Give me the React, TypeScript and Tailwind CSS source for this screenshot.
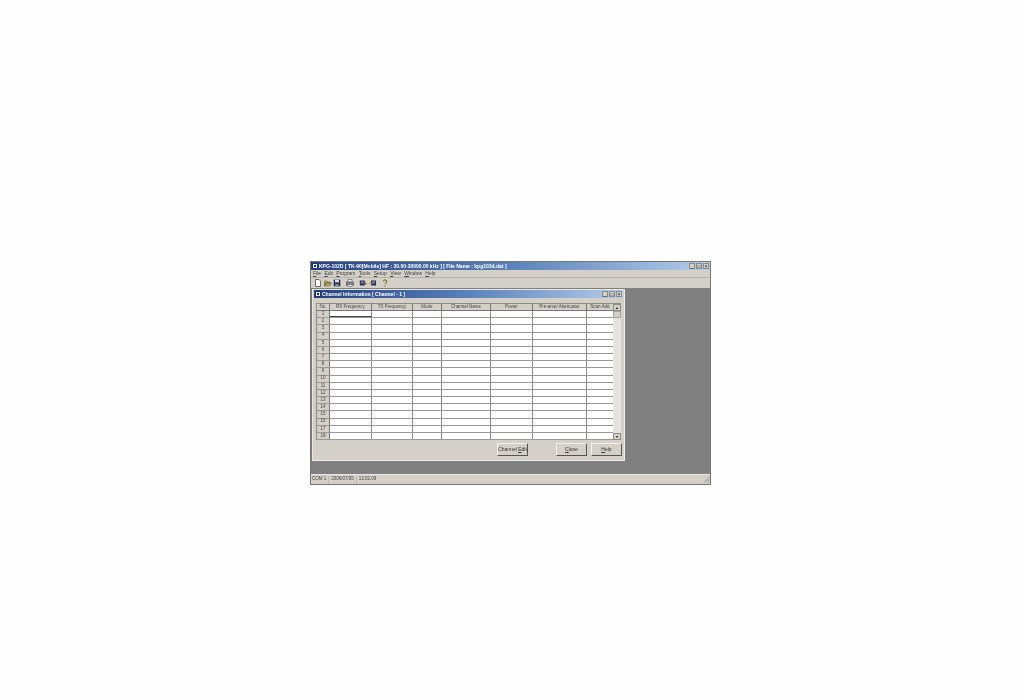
const columns = [
  { label: 'RX Frequency', width: 'w-[42px]' },
  { label: 'TX Frequency', width: 'w-[41px]' },
  { label: 'Mode', width: 'w-[29px]' },
  { label: 'Channel Name', width: 'w-[49px]' },
  { label: 'Power', width: 'w-[42px]' },
  { label: 'Pre-amp/ Attenuator', width: 'w-[54px]' },
  { label: 'Scan Add', width: 'w-[27px]' },
];

const rows = Array.from({ length: 18 }, (_, i) => i + 1);
const menus = ['File', 'Edit', 'Program', 'Tools', 'Setup', 'View', 'Window', 'Help'];

function AppIcon() {
  return (
    <div className="w-[6px] h-[6px] bg-[#e8eef8] border border-[#26365f] flex items-center justify-center shrink-0">
      <div className="w-[2px] h-[2px] bg-[#1d2f66]" />
    </div>
  );
}

function WinButtons() {
  return (
    <div className="flex items-center gap-[1px]">
      {['_', '□', '×'].map((g) => (
        <div
          key={g}
          className="w-[6px] h-[6px] bg-[#d4d0c8] border border-[#8b8b85] flex items-center justify-center text-[5px] leading-none text-[#222]"
        >
          {g}
        </div>
      ))}
    </div>
  );
}

function ToolIcon({ kind }: { kind: string }) {
  return (
    <svg width="8" height="8" viewBox="0 0 8 8" className="shrink-0">
      {kind === 'new' && <path d="M1.5.5h3.5l1.5 1.5v5.5h-5z" fill="#fff" stroke="#333" strokeWidth=".7" />}
      {kind === 'open' && <path d="M.5 2h2.5l1 1h2v1H2L.5 7zM2 4h5.5L6 7H.5z" fill="#c9b045" stroke="#444" strokeWidth=".5" />}
      {kind === 'save' && (
        <g>
          <rect x=".7" y=".7" width="6.6" height="6.6" fill="#1c2c5c" />
          <rect x="2" y="1" width="4" height="2.4" fill="#ddd" />
          <rect x="2.2" y="5" width="3.4" height="2" fill="#888" />
        </g>
      )}
      {kind === 'print' && (
        <g>
          <rect x="2" y=".7" width="4" height="2.5" fill="#eee" stroke="#444" strokeWidth=".5" />
          <rect x=".6" y="3" width="6.8" height="3.2" fill="#888" stroke="#333" strokeWidth=".5" />
          <rect x="2" y="5.5" width="4" height="1.8" fill="#eee" stroke="#444" strokeWidth=".4" />
        </g>
      )}
      {kind === 'read' && (
        <g>
          <rect x=".8" y="1.5" width="5" height="5" fill="#2a2f55" />
          <rect x="2" y="2.4" width="2.6" height="2" fill="#7d8fc0" />
          <path d="M5 4.5h2.6M7.6 4.5l-1.4-1.2M7.6 4.5l-1.4 1.2" stroke="#7c5a18" strokeWidth=".7" fill="none" />
        </g>
      )}
      {kind === 'write' && (
        <g>
          <rect x="2" y="1.5" width="5" height="5" fill="#2a2f55" />
          <rect x="3.2" y="2.4" width="2.6" height="2" fill="#7d8fc0" />
          <path d="M.4 4.5H3M3 4.5L1.8 3.3M3 4.5L1.8 5.7" stroke="#b58a20" strokeWidth=".7" fill="none" />
        </g>
      )}
      {kind === 'help' && (
        <path d="M2.5 2.4a1.6 1.6 0 1 1 2.4 1.5c-.6.4-.9.7-.9 1.4M4 6.3v1.2" fill="none" stroke="#7a7a20" strokeWidth="1.1" />
      )}
    </svg>
  );
}

function DialogButton({ children, width }: { children: React.ReactNode; width: string }) {
  return (
    <div
      className={`${width} h-[13px] bg-[#d4d0c8] border border-t-[#f2f0ea] border-l-[#f2f0ea] border-r-[#55554f] border-b-[#55554f] flex items-center justify-center text-[5px] leading-none text-[#333]`}
    >
      {children}
    </div>
  );
}

export default function App() {
  return (
    <div
      className="w-full h-[700px] bg-[#fefefe] pt-[261px] pl-[310px] overflow-hidden"
      style={{ fontFamily: '"Liberation Sans", Arial, sans-serif' }}
    >
      <div className="w-[401px] h-[224px] bg-[#d4d0c8] border border-[#77776f] flex flex-col blur-[0.4px]">
        {/* main title */}
        <div className="h-[8px] shrink-0 bg-gradient-to-r from-[#24417f] via-[#5b82bb] to-[#b4cde9] flex items-center pl-[1px] pr-[1px] gap-[1px]">
          <AppIcon />
          <span className="text-[5px] leading-none font-bold text-white whitespace-nowrap">
            KPG-102D [ TK-90[Mobile] HF : 30.00-30000.00 kHz ] [ File Name : kpg102d.dat ]
          </span>
          <div className="ml-auto">
            <WinButtons />
          </div>
        </div>

        {/* menu */}
        <div className="h-[7px] shrink-0 flex items-center gap-[3.3px] pl-[2px] text-[5px] leading-none text-[#444]">
          {menus.map((m) => (
            <span key={m}>
              <span className="underline">{m[0]}</span>
              {m.slice(1)}
            </span>
          ))}
        </div>

        {/* toolbar */}
        <div className="h-[11px] shrink-0 flex items-start pt-[1px] pl-[3px] border-t border-[#b5b2aa]">
          <div className="flex items-center gap-[1.5px]">
            <ToolIcon kind="new" />
            <ToolIcon kind="open" />
            <ToolIcon kind="save" />
            <div className="w-[2px]" />
            <ToolIcon kind="print" />
            <div className="w-[2px]" />
            <ToolIcon kind="read" />
            <ToolIcon kind="write" />
            <div className="w-[1px]" />
            <ToolIcon kind="help" />
          </div>
        </div>

        {/* mdi area */}
        <div className="flex-1 bg-[#808080] pl-[1px] pt-[1px]">
          <div className="w-[313px] h-[172px] bg-[#d4d0c8] border border-t-[#e8e6e0] border-l-[#e8e6e0] border-r-[#f0eee8] border-b-[#f0eee8] flex flex-col">
            <div className="h-[8px] mx-[1px] shrink-0 bg-gradient-to-r from-[#24417f] via-[#5b82bb] to-[#b4cde9] flex items-center pl-[1px] pr-[1px] gap-[1px]">
              <AppIcon />
              <span className="text-[5px] leading-none font-bold text-white whitespace-nowrap">
                Channel Information [ Channel - 1 ]
              </span>
              <div className="ml-auto">
                <WinButtons />
              </div>
            </div>

            {/* grid */}
            <div className="ml-[3px] mt-[5px] w-[305px] h-[137px] bg-white flex border-t border-l border-[#8c8c86]">
              <div className="flex-1 flex flex-col min-w-0">
                <div className="h-[7px] shrink-0 flex bg-[#d4d0c8] border-b border-[#777]">
                  <div className="w-[13px] shrink-0 border-r border-[#777] flex items-center justify-center text-[4.5px] leading-none text-[#444]">
                    No.
                  </div>
                  {columns.map((c) => (
                    <div
                      key={c.label}
                      className={`${c.width} shrink-0 border-r border-[#777] flex items-center justify-center text-[4.5px] leading-none text-[#444] whitespace-nowrap overflow-hidden`}
                    >
                      {c.label}
                    </div>
                  ))}
                </div>
                <div className="flex-1 flex flex-col">
                  {rows.map((r) => (
                    <div key={r} className="flex-1 flex border-b border-[#9a9a94] min-h-0">
                      <div className="w-[13px] shrink-0 bg-[#d4d0c8] border-r border-[#777] flex items-center justify-center text-[4.5px] leading-none text-[#444]">
                        {r}
                      </div>
                      {columns.map((c, i) => (
                        <div
                          key={c.label}
                          className={`${c.width} shrink-0 border-r border-[#8c8c86] ${r === 1 && i === 0 ? 'border-b border-b-[#444]' : ''}`}
                        />
                      ))}
                    </div>
                  ))}
                </div>
              </div>

              {/* scrollbar */}
              <div className="w-[8px] shrink-0 bg-[#e6e4de] flex flex-col">
                <div className="h-[7px] bg-[#d4d0c8] border border-[#8c8c86] flex items-center justify-center">
                  <div className="w-0 h-0 border-x-[1.5px] border-x-transparent border-b-[2px] border-b-black" />
                </div>
                <div className="h-[7px] bg-[#d4d0c8] border border-[#a5a39c]" />
                <div className="flex-1" />
                <div className="h-[7px] bg-[#d4d0c8] border border-[#8c8c86] flex items-center justify-center">
                  <div className="w-0 h-0 border-x-[1.5px] border-x-transparent border-t-[2px] border-t-black" />
                </div>
              </div>
            </div>

            {/* buttons */}
            <div className="flex-1 flex items-start justify-end pr-[2px] pt-[3px]">
              <DialogButton width="w-[31px]">
                <span>
                  Channel <span className="underline">E</span>dit
                </span>
              </DialogButton>
              <div className="w-[28px]" />
              <DialogButton width="w-[31px]">
                <span>
                  <span className="underline">C</span>lose
                </span>
              </DialogButton>
              <div className="w-[4px]" />
              <DialogButton width="w-[31px]">
                <span>
                  <span className="underline">H</span>elp
                </span>
              </DialogButton>
            </div>
          </div>
        </div>

        {/* status bar */}
        <div className="h-[10px] shrink-0 flex items-center text-[4.5px] leading-none text-[#444] border-t border-[#e8e6e0]">
          <div className="pl-[1px] pr-[2px] h-[8px] flex items-center border-r border-[#bdbab2]">COM 1</div>
          <div className="px-[2px] h-[8px] flex items-center border-r border-[#bdbab2]">2006/07/05</div>
          <div className="px-[2px] h-[8px] flex items-center">13:02:09</div>
          <svg width="7" height="7" viewBox="0 0 7 7" className="ml-auto">
            <path d="M6.5 1L1 6.5M6.5 3.2L3.2 6.5M6.5 5.2L5.2 6.5" stroke="#888" strokeWidth=".7" />
          </svg>
        </div>
      </div>
    </div>
  );
}
